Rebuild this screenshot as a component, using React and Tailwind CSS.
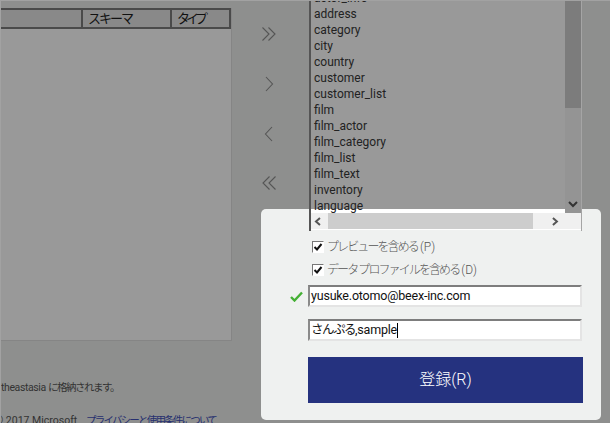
import React from 'react'

const tables = ['actor_info', 'address', 'category', 'city', 'country', 'customer', 'customer_list', 'film', 'film_actor', 'film_category', 'film_list', 'film_text', 'inventory', 'language']

const font = { fontFamily: 'Roboto, "Noto Sans CJK JP", sans-serif' }

function Chevrons({ dir, double }) {
  const flip = dir === 'left' ? 'scale-x-[-1]' : ''
  return (
    <svg width="16" height="16" viewBox="0 0 16 16" fill="none" stroke="#555" strokeWidth="1.1" className={flip}>
      {double ? (
        <>
          <path d="M1.5 1.5 L8 8 L1.5 14.5" />
          <path d="M7.5 1.5 L14 8 L7.5 14.5" />
        </>
      ) : (
        <path d="M5 1 L11.5 8 L5 15" />
      )}
    </svg>
  )
}

function Check({ label, accel }) {
  return (
    <div className="flex items-center h-[23px] pl-[4px]">
      <div className="w-[12px] h-[12px] border border-[#777] border-r-white border-b-white bg-white flex items-center justify-center">
        <svg width="10" height="10" viewBox="0 0 10 10" fill="none" stroke="#111" strokeWidth="2">
          <path d="M1.5 5 L4 7.5 L8.5 2" />
        </svg>
      </div>
      <span className="ml-[3px] text-[12px] font-light text-[#555]">
        <span className="tracking-[-1.9px]">{label}</span>
        <span className="ml-[2px]">{accel}</span>
      </span>
    </div>
  )
}

function Field({ children }) {
  return (
    <div className="w-[274px] h-[22px] bg-white border-2 border-[#7d7d7d] border-r-[#e4e4e4] border-b-[#e4e4e4] border-l-[#8a8a8a] pl-[1px] flex items-center text-[12.5px] tracking-[-0.2px] text-[#111]">
      {children}
    </div>
  )
}

export default function App() {
  return (
    <div className="relative w-[610px] h-[423px] overflow-hidden bg-[#8e8f8e] border-t border-l border-[#a2a2a2] text-[#111]" style={font}>
      <div className="flex">
        <div className="w-[231px] shrink-0 pt-[7px]">
          <div className="h-[333px] bg-[#999999] border-r border-b border-[#858585]">
            <div className="flex h-[21px] bg-[#898989] border-t-2 border-b-2 border-r-2 border-[#4a4a4a] text-[13px] leading-[17px]">
              <div className="w-[82px] border-r-2 border-[#4a4a4a]" />
              <div className="w-[89px] pl-[5px] border-r-2 border-[#4a4a4a] tracking-[-2px]">スキーマ</div>
              <div className="flex-1 pl-[5px] tracking-[-4px]">タイプ</div>
            </div>
          </div>
          <div className="mt-[39px] text-[10.5px] text-[#333] whitespace-nowrap">
            <span className="tracking-[-0.4px]">theastasia </span>
            <span className="tracking-[-1.5px]">に格納されます。</span>
          </div>
          <div className="mt-[17px] flex text-[10.5px] text-[#333] whitespace-nowrap -ml-[6px] h-[14px]">
            <span className="w-[91px] shrink-0">© 2017 Microsoft</span>
            <span className="text-[#27306f] tracking-[-1.8px]">プライバシーと使用条件について</span>
          </div>
        </div>

        <div className="w-[77px] shrink-0 flex flex-col items-center pt-[25px] gap-[34px] pr-[3px]">
          <Chevrons double />
          <Chevrons />
          <Chevrons dir="left" />
          <div className="-mt-[1px]">
            <Chevrons dir="left" double />
          </div>
        </div>

        <div className="relative z-20 w-[273px] h-[230px] border-l-2 border-[#555] border-r border-r-[#a5a5a5] flex flex-col">
          <div className="relative h-[212px] bg-[#999999] overflow-hidden flex">
            <div className="absolute left-0 right-[16px] top-[208px] h-[4px] bg-white" />
            <div className="relative flex-1 pl-[3px] -mt-[11px] text-[12px] leading-[16px] text-[#222]">
              {tables.map(t => (
                <div key={t}>{t}</div>
              ))}
            </div>
            <div className="relative w-[16px] bg-[#949494]">
              <div className="h-[107px] bg-[#7c7c7c]" />
              <svg width="10" height="7" viewBox="0 0 10 7" fill="none" stroke="#333" strokeWidth="2" className="absolute left-[3px] top-[200px]">
                <path d="M1 1 L5 5 L9 1" />
              </svg>
            </div>
          </div>
          <div className="h-[17px] bg-[#f0f0f0] flex items-center border-b border-white">
            <svg width="17" height="9" viewBox="0 0 17 9" fill="none" stroke="#555" strokeWidth="2">
              <path d="M9 1 L5 4.5 L9 8" />
            </svg>
            <div className="w-[206px] h-full bg-[#cdcdcd]" />
            <svg width="48" height="9" viewBox="0 0 48 9" fill="none" stroke="#555" strokeWidth="2">
              <path d="M20 1 L24 4.5 L20 8" />
            </svg>
          </div>
        </div>
      </div>

      <div className="absolute z-10 left-[260px] top-[208px] w-[340px] h-[211px] bg-[#eff1f0] rounded-[5px] pl-[47px] pt-[26px]">
        <Check label="プレビューを含める" accel="(P)" />
        <Check label="データ プロファイルを含める" accel="(D)" />
        <div className="relative mt-[4px]">
          <svg width="13" height="11" viewBox="0 0 13 11" fill="none" stroke="#44b034" strokeWidth="2.4" className="absolute -left-[18px] top-[6px]">
            <path d="M1 6 L4.5 9.5 L12 1.5" />
          </svg>
          <Field>yusuke.otomo@beex-inc.com</Field>
        </div>
        <div className="mt-[12px]">
          <Field>
            <span className="tracking-[-1.5px]">さんぷる</span>
            ,sample
            <span className="w-px h-[15px] bg-black" />
          </Field>
        </div>
        <button className="mt-[16px] w-[275px] h-[46px] bg-[#25327f] text-white text-[16px] font-light">登録(R)</button>
      </div>
    </div>
  )
}
